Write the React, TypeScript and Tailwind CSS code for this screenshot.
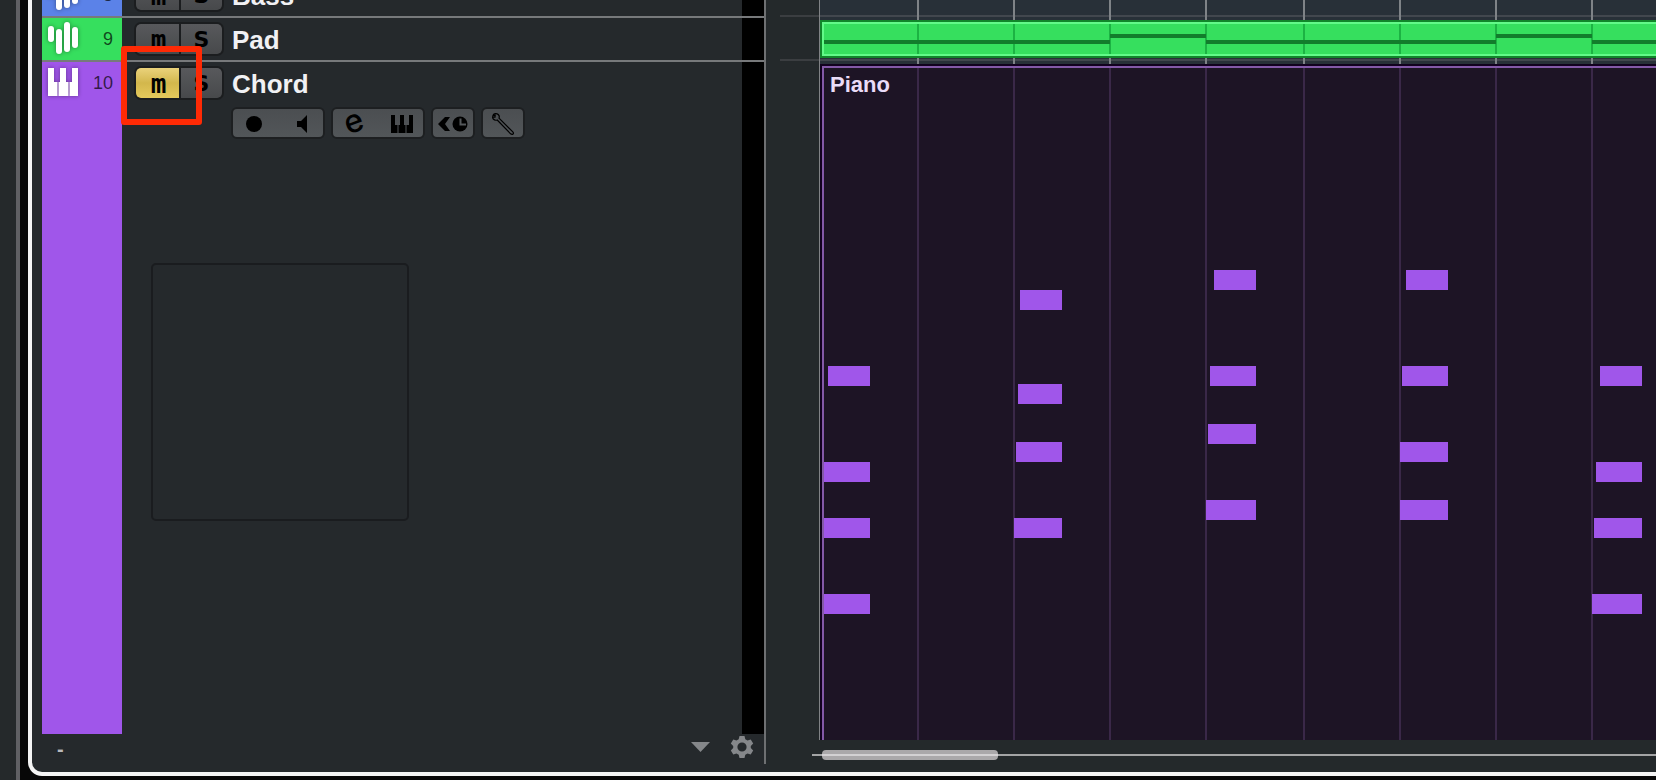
import { useState } from 'react';
import type { ReactNode } from 'react';

interface Note {
  x: number;
  y: number;
  w: number;
}

interface Track {
  id: number;
  name: string;
  color: string;
  icon: 'bars' | 'keys';
}

const TRACKS: Track[] = [
  { id: 8, name: 'Bass', color: 'bg-[#5b82e8]', icon: 'bars' },
  { id: 9, name: 'Pad', color: 'bg-[#36df5e]', icon: 'bars' },
  { id: 10, name: 'Chord', color: 'bg-[#a056ea]', icon: 'keys' },
];

// Bar positions, measured from the start of the timeline
const BARS = [97, 193, 289, 385, 483, 579, 675, 771];

const PIANO_NOTES: Note[] = [
  { x: 8, y: 302, w: 42 },
  { x: 4, y: 398, w: 46 },
  { x: 4, y: 454, w: 46 },
  { x: 4, y: 530, w: 46 },
  { x: 200, y: 226, w: 42 },
  { x: 198, y: 320, w: 44 },
  { x: 196, y: 378, w: 46 },
  { x: 194, y: 454, w: 48 },
  { x: 394, y: 206, w: 42 },
  { x: 390, y: 302, w: 46 },
  { x: 388, y: 360, w: 48 },
  { x: 386, y: 436, w: 50 },
  { x: 586, y: 206, w: 42 },
  { x: 582, y: 302, w: 46 },
  { x: 580, y: 378, w: 48 },
  { x: 580, y: 436, w: 48 },
  { x: 780, y: 302, w: 42 },
  { x: 776, y: 398, w: 46 },
  { x: 774, y: 454, w: 48 },
  { x: 772, y: 530, w: 50 },
];

const PAD_NOTES: Note[] = [
  { x: 4, y: 20, w: 286 },
  { x: 290, y: 14, w: 96 },
  { x: 386, y: 20, w: 290 },
  { x: 676, y: 14, w: 96 },
  { x: 772, y: 20, w: 96 },
];

function BarsIcon() {
  return (
    <svg width="32" height="34" viewBox="0 0 32 34" fill="#fff" className="drop-shadow-[0_0_2px_rgba(0,0,0,0.4)]">
      <rect x="1" y="5" width="6" height="16" rx="3" />
      <rect x="9" y="8" width="6" height="25" rx="3" />
      <rect x="17" y="1" width="6" height="30" rx="3" />
      <rect x="25" y="6" width="6" height="21" rx="3" />
    </svg>
  );
}

function KeysIcon() {
  return (
    <svg width="32" height="34" viewBox="0 0 32 34" fill="#fff" className="drop-shadow-[0_0_2px_rgba(0,0,0,0.4)]">
      <path d="M1 3h6v14h3.500v14H1z M13 3h6v14h2.500v14h-10V17H13z M25 3h6v28h-8.500V17H25z" />
    </svg>
  );
}

function GridLines({ className }: { className: string }) {
  return (
    <>
      {BARS.map((x) => (
        <span key={x} className={`absolute w-[2px] ${className}`} style={{ left: x }} />
      ))}
    </>
  );
}

function ToolGroup({ children }: { children: ReactNode }) {
  return (
    <div className="flex h-8 gap-[6px] rounded-[6px] border-2 border-[#1d1f21] bg-gradient-to-b from-[#4b4e51] to-[#525659]">
      {children}
    </div>
  );
}

function ToolButton({ label, children }: { label: string; children: ReactNode }) {
  return (
    <button aria-label={label} className="flex h-7 flex-1 items-center justify-center pt-[2px] text-black">
      {children}
    </button>
  );
}

function TrackTools() {
  return (
    <div className="mt-[2px] flex gap-[6px] pl-[109px]">
      <div className="grid w-[94px]">
        <ToolGroup>
          <ToolButton label="Record enable">
            <svg width="18" height="18" viewBox="0 0 18 18">
              <circle cx="9" cy="9" r="8" />
            </svg>
          </ToolButton>
          <ToolButton label="Monitor">
            <svg width="12" height="20" viewBox="0 0 12 20">
              <path d="M1 7h4l6-6v18l-6-6H1z" />
            </svg>
          </ToolButton>
        </ToolGroup>
      </div>
      <div className="grid w-[94px]">
        <ToolGroup>
          <ToolButton label="Edit instrument">
            <span className="-rotate-[20deg] pb-[6px] font-['Inter'] text-[32px] leading-7 font-medium">e</span>
          </ToolButton>
          <ToolButton label="Show keyboard">
            <svg width="24" height="20" viewBox="0 0 24 20">
              <path d="M1 1h4v10h2.500v8H1z M10 1h4v10h1.500v8h-7v-8H10z M19 1h4v18h-6.500v-8H19z" />
            </svg>
          </ToolButton>
        </ToolGroup>
      </div>
      <div className="grid w-[44px]">
        <ToolGroup>
          <ToolButton label="Time base">
            <svg width="32" height="20" viewBox="0 0 32 20">
              <path d="M1 10l7-7h5l-5 7 5 7H8z" />
              <circle cx="23" cy="10" r="7.5" />
              <path d="M23.500 4.500V10.500H29" fill="none" stroke="#54585b" strokeWidth="2" />
            </svg>
          </ToolButton>
        </ToolGroup>
      </div>
      <div className="grid w-[44px]">
        <ToolGroup>
          <ToolButton label="Freeze channel">
            <svg width="24" height="24" viewBox="0 0 24 24" fill="none" stroke="#000" strokeWidth="1.200">
              <path d="M2 3.500C2.500 1.500 5.500.800 7.200 2.500C8.300 3.600 8.500 5 8 6.200L21.800 19.800Q23 21.200 22 22Q21 23 19.600 21.800L6.200 8C4.800 8.500 3.300 8.200 2.300 7Q1.500 6 1.600 5L4 5.200L4.200 3.200z" />
            </svg>
          </ToolButton>
        </ToolGroup>
      </div>
    </div>
  );
}

interface TrackRowProps {
  track: Track;
  muted: boolean;
  onMute: () => void;
  expanded?: boolean;
}

function TrackRow({ track, muted, onMute, expanded }: TrackRowProps) {
  return (
    <div className={expanded ? 'flex min-h-0 flex-1' : 'flex h-11 shrink-0 border-b-2 border-[#77797b]'}>
      <div className={`flex w-20 items-start justify-between pl-[5px] pr-[9px] pt-[3px] ${track.color}`}>
        {track.icon === 'bars' ? <BarsIcon /> : <KeysIcon />}
        <span className="pt-[6px] text-[18px] leading-6 text-black/70">{track.id}</span>
      </div>
      <div className="flex-1">
        <div className="flex h-[43px] items-start gap-2 pl-3 pt-1">
          <div className="flex h-[34px] w-[90px] gap-[2px] overflow-hidden rounded-[7px] border-2 border-[#1b1d1f] bg-[#1b1d1f]">
            <button
              aria-label={`Mute ${track.name}`}
              aria-pressed={muted}
              onClick={onMute}
              className={`flex-1 rounded-l-[4px] bg-gradient-to-b pt-[2px] pl-[2px] font-['DejaVu_Sans_Mono'] text-[26px] leading-6 font-bold text-black ${
                muted ? 'from-[#ead27b] via-[#d3b74c] to-[#e5c95c]' : 'from-[#58595c] to-[#47494b]'
              }`}
            >
              m
            </button>
            <button
              aria-label={`Solo ${track.name}`}
              className="flex-1 rounded-r-[4px] bg-gradient-to-b from-[#58595c] to-[#47494b] pt-[2px] font-['DejaVu_Sans'] text-[22px] leading-6 font-bold text-black"
            >
              S
            </button>
          </div>
          <span className="pt-[2px] text-[26px] leading-8 font-bold text-[#f1f1f4]">{track.name}</span>
        </div>
        {expanded && (
          <>
            <TrackTools />
            <div className="mt-[124px] ml-[29px] size-[258px] rounded-[5px] border-2 border-[#1a1c1f]" />
          </>
        )}
      </div>
      <div className="w-[22px] bg-black" />
    </div>
  );
}

export default function App() {
  const [muted, setMuted] = useState<number[]>([10]);

  const toggleMute = (id: number) => {
    setMuted((m) => (m.includes(id) ? m.filter((i) => i !== id) : [...m, id]));
  };

  return (
    <div className="relative flex h-screen overflow-hidden bg-[#070707] font-['Liberation_Sans',sans-serif]">
      <div className="w-5 shrink-0 border-r-4 border-[#606064] bg-[#25292b]" />

      <main className="mb-1 ml-2 flex min-w-0 flex-1 overflow-hidden rounded-bl-[14px] border-b-4 border-l-4 border-[#f4f4f4] bg-[#25292c] pl-[10px]">
        {/* Track list */}
        <section className="flex w-[722px] shrink-0 flex-col">
          <div className="flex min-h-0 flex-1 flex-col overflow-hidden">
            <div className="-mt-[26px] flex min-h-0 flex-1 flex-col">
              {TRACKS.map((track) => (
                <TrackRow
                  key={track.id}
                  track={track}
                  muted={muted.includes(track.id)}
                  onMute={() => toggleMute(track.id)}
                  expanded={track.id === 10}
                />
              ))}
            </div>
          </div>
          <footer className="flex h-[38px] shrink-0 items-start gap-5 pr-[10px] pl-[15px] text-[#85878a]">
            <span className="mr-auto pt-[3px] text-[20px] leading-6 font-bold text-[#b9babc]">-</span>
            <button aria-label="Track list presets" className="pt-2">
              <svg width="19" height="10" viewBox="0 0 19 10" fill="currentColor">
                <path d="M0 0h19L9.500 10z" />
              </svg>
            </button>
            <button aria-label="Settings" className="pt-[1px]">
              <svg width="24" height="24" viewBox="-12 -12 24 24" fill="currentColor">
                <path
                  fillRule="evenodd"
                  d="M-2.500-11h5l.8 3.200 2.200 1.200 3.200-1 2.500 4.200-2.400 2.300v2.200l2.400 2.300-2.500 4.200-3.200-1-2.200 1.200-.8 3.200h-5l-.8-3.200-2.200-1.200-3.200 1-2.500-4.200 2.400-2.300v-2.200l-2.400-2.300 2.500-4.200 3.200 1 2.200-1.200zM0-4.600a4.600 4.600 0 1 0 0 9.200 4.600 4.600 0 0 0 0-9.200z"
                />
              </svg>
            </button>
          </footer>
        </section>

        <div className="mb-2 w-[2px] shrink-0 bg-[#6e7072]" />

        {/* Arrangement */}
        <section className="flex min-w-0 flex-1 flex-col bg-[#24292b]">
          <div className="flex min-h-0 flex-1 pl-[14px]">
            <div className="w-[39px] shrink-0">
              <div className="h-[17px] border-b-2 border-[#3b3e41]" />
              <div className="h-11 border-b-2 border-[#3b3e41]" />
            </div>
            <div className="relative flex min-w-0 flex-1 flex-col overflow-hidden border-l border-[#808285] bg-[#283038]">
              <GridLines className="inset-y-0 bg-[#7f8387]" />
              <div className="h-[17px] shrink-0 border-b-2 border-[#42474e]" />
              <div className="flex h-11 shrink-0 border-b-2 border-[#42474e] pt-[3px] pb-[1px]">
                <div className="relative flex flex-1 border-y-2 border-l-2 border-[#11862a]">
                  <div className="flex-1 border-y-2 border-l-2 border-[#62fa88] bg-[#36df5e]" />
                  <div className="absolute -inset-[2px]">
                    <GridLines className="inset-y-1 bg-[#1cb343]" />
                    {PAD_NOTES.map((note) => (
                      <span
                        key={note.x}
                        className="absolute h-1 bg-[#127d2c]"
                        style={{ left: note.x, top: note.y, width: note.w }}
                      />
                    ))}
                  </div>
                </div>
              </div>
              <div className="flex min-h-0 flex-1 pt-[3px]">
                <div className="relative flex flex-1 border-t-2 border-l-2 border-[#12021f]">
                  <div className="flex-1 border-t-2 border-l-2 border-[#8459a8] bg-[#1d1425]">
                    <h2 className="pt-[5px] pl-[6px] text-[22px] leading-6 font-bold text-[#eadcf8]">Piano</h2>
                  </div>
                  <div className="absolute -inset-[2px] bottom-0">
                    <GridLines className="top-1 bottom-0 bg-[#3a2848]" />
                    {PIANO_NOTES.map((note) => (
                      <span
                        key={`${note.x}-${note.y}`}
                        className="absolute h-5 bg-[#a056ea]"
                        style={{ left: note.x, top: note.y, width: note.w }}
                      />
                    ))}
                  </div>
                </div>
              </div>
            </div>
          </div>

          {/* Horizontal scroll */}
          <div className="h-8 shrink-0 pt-[10px] pl-[46px]">
            <div className="flex h-[10px] items-center">
              <div className="h-[2px] w-[10px] bg-[#a3a4a5]" />
              <div className="flex h-[10px] w-44 items-center rounded-[4px] bg-[#aaa8aa]">
                <div className="h-[2px] flex-1 bg-[#d3d1d3]" />
              </div>
              <div className="h-[2px] flex-1 bg-[#a3a4a5]" />
            </div>
          </div>
        </section>
      </main>

      {/* Highlight around the mute button */}
      <div className="pointer-events-none absolute top-[46px] left-[121px] h-[79px] w-[81px] rounded-[3px] border-[6px] border-[#ff2a05]" />
    </div>
  );
}
